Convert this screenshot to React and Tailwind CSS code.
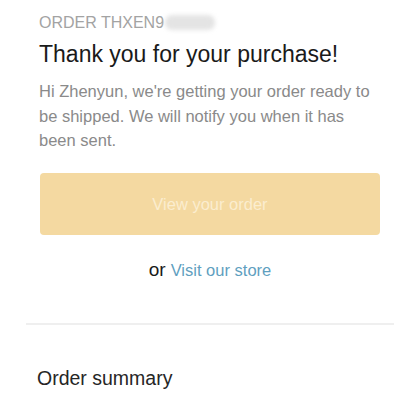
export default function App() {
  return (
    <div className="w-[420px] h-[420px] bg-white overflow-hidden" style={{ fontFamily: '"Liberation Sans", Arial, sans-serif' }}>
      <div className="px-[39px] pt-[12px]">
        <div className="flex items-center text-[16px] leading-[21px] text-[#a3a3a3]">
          <span>ORDER THXEN9</span>
          <span className="ml-[1px] w-[50px] h-[15px] rounded-[7px] bg-[#e4e4e4] blur-[2px]"></span>
        </div>
        <h1 className="mt-[6px] text-[23px] leading-[30px] text-[#1a1a1a]">Thank you for your purchase!</h1>
        <p className="mt-[10px] text-[16.5px] leading-[24.5px] text-[#8a8a8a] pr-[4px]">
          Hi Zhenyun, we're getting your order ready to be shipped. We will notify you when it has been sent.
        </p>
      </div>
      <div className="mx-[40px] mt-[20.5px] h-[62px] rounded-[4px] bg-[#f4d9a1] flex items-center justify-center text-[16.5px] text-[#fbedcf]">
        View your order
      </div>
      <div className="mt-[24px] flex justify-center items-baseline text-[16.5px] leading-[22px]">
        <span className="text-[#1a1a1a] text-[19px]">or</span>
        <span className="ml-[5px] text-[#5f9fbf]">Visit our store</span>
      </div>
      <div className="mx-[26px] mt-[42px] h-[2px] bg-[#efefef]"></div>
      <div className="px-[37px] mt-[41px] text-[19.5px] leading-[24px] text-[#262626]">Order summary</div>
    </div>
  );
}
